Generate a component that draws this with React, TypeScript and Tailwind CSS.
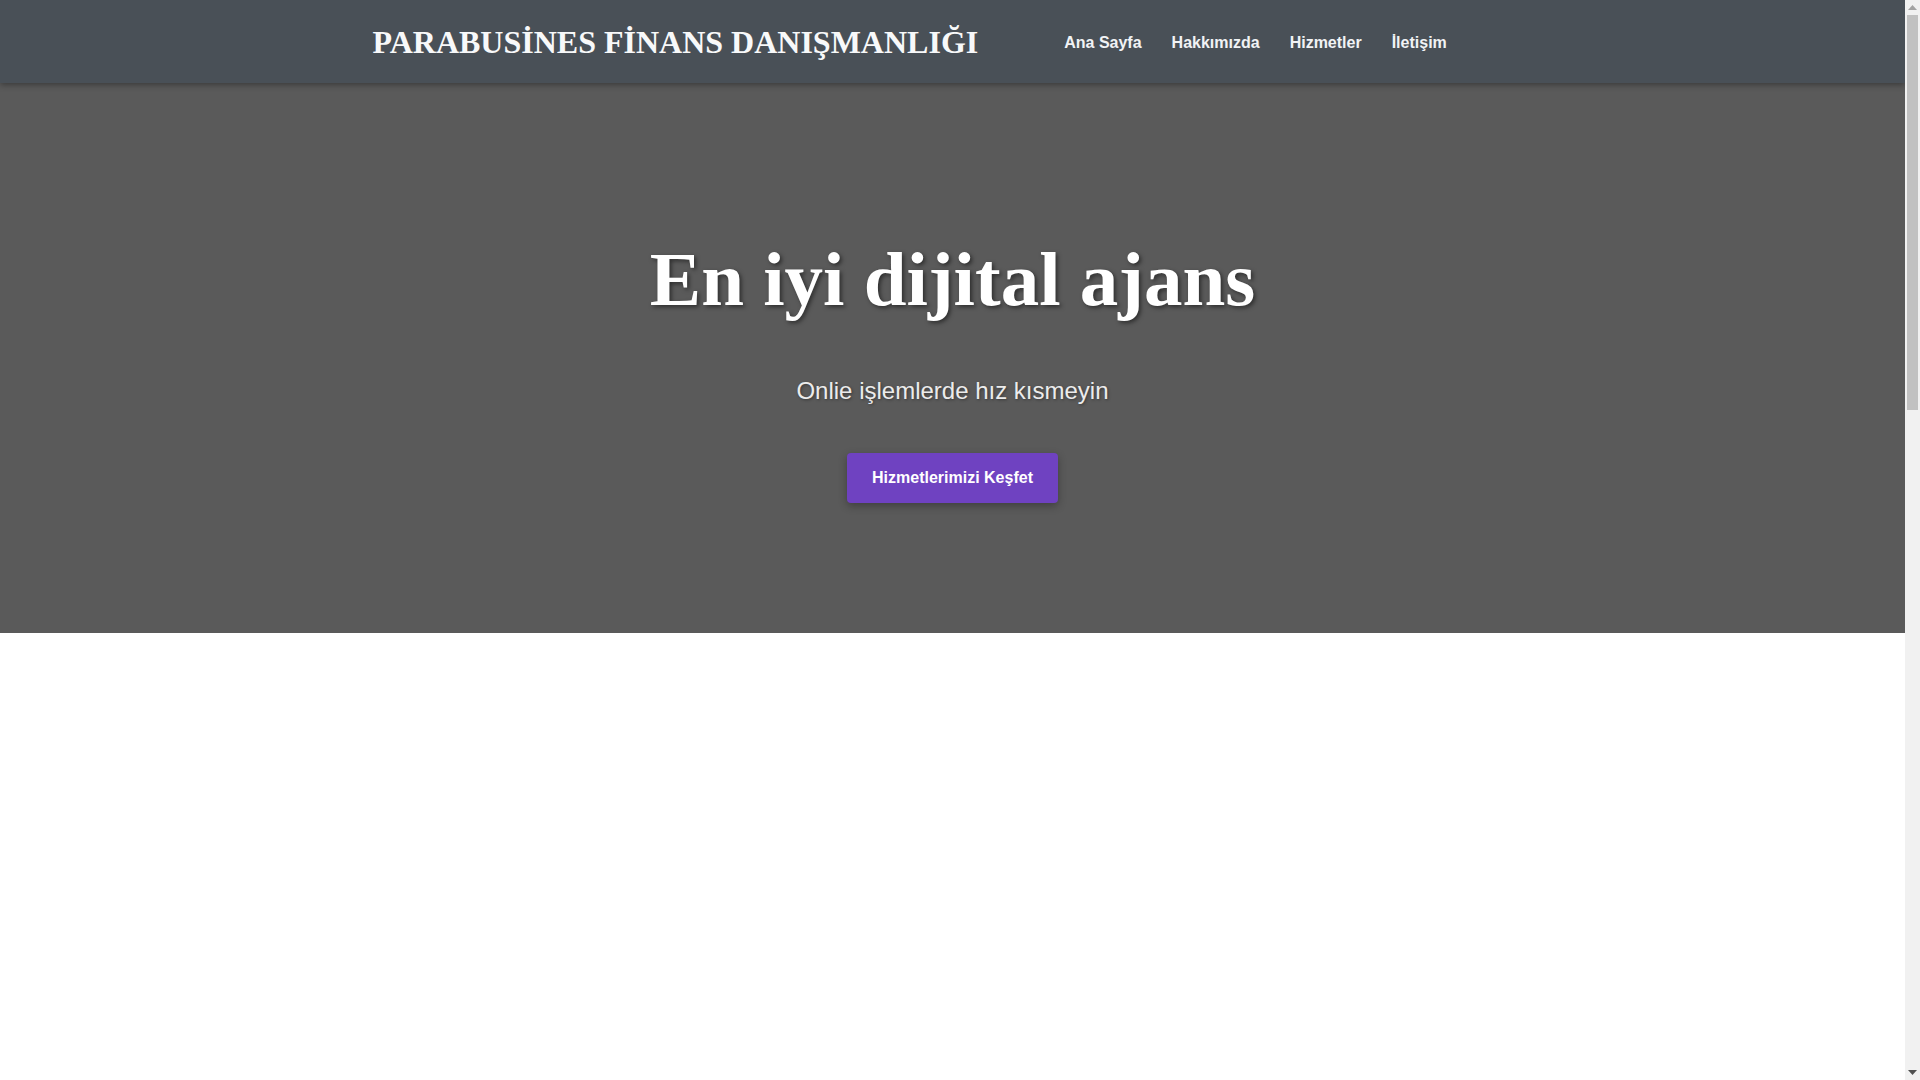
export default function App() {
  const links = ["Ana Sayfa", "Hakkımızda", "Hizmetler", "İletişim"];
  return (
    <div className="flex h-screen overflow-hidden bg-white">
      <main className="h-full min-w-0 flex-1 overflow-hidden">
        <header className="relative z-10 h-[83px] bg-[#495057] shadow-[0_2px_6px_rgba(0,0,0,0.35)]">
          <div className="mx-auto flex h-full w-[1200px] items-center px-5">
            <div className="whitespace-nowrap font-['Liberation_Serif',serif] text-[32px] font-bold leading-none text-[#f8f9fa]">
              PARABUSİNES FİNANS DANIŞMANLIĞI
            </div>
            <nav className="ml-[86px] mt-[2px] flex items-center gap-[30px] font-['Liberation_Sans',Arial,sans-serif] text-[16px] font-bold text-[#f1f3f5]">
              {links.map((l) => (
                <a key={l} href="#" className="whitespace-nowrap">
                  {l}
                </a>
              ))}
            </nav>
          </div>
        </header>
        <section className="flex h-[550px] flex-col items-center bg-[#5a5a5a] pt-[151px] text-center">
          <h1 className="font-['Liberation_Serif',serif] text-[77px] font-bold leading-[91px] text-white [text-shadow:2px_2px_4px_rgba(0,0,0,0.5)]">
            En iyi dijital ajans
          </h1>
          <p className="mt-[52px] font-['Liberation_Sans',Arial,sans-serif] text-[24px] leading-[28px] text-[#ececec] [text-shadow:1px_1px_3px_rgba(0,0,0,0.4)]">
            Onlie işlemlerde hız kısmeyin
          </p>
          <a
            href="#"
            className="mt-[48px] rounded-[4px] bg-[#6f42c1] px-[25px] py-[15px] font-['Liberation_Sans',Arial,sans-serif] text-[16px] font-bold leading-[20px] text-white shadow-[0_3px_8px_rgba(0,0,0,0.3)]"
          >
            Hizmetlerimizi Keşfet
          </a>
        </section>
        <section className="h-[2237px] bg-white" />
      </main>
      <aside className="flex h-full w-[15px] shrink-0 flex-col bg-[#f1f1f1]">
        <div className="flex h-[15px] shrink-0 items-center justify-center">
          <svg width="9" height="5" viewBox="0 0 9 5">
            <path d="M4.5 0 L9 5 L0 5 Z" fill="#a3a3a3" />
          </svg>
        </div>
        <div className="mx-[2px] h-[395px] shrink-0 bg-[#c1c1c1]" />
        <div className="flex-1" />
        <div className="flex h-[15px] shrink-0 items-center justify-center">
          <svg width="9" height="5" viewBox="0 0 9 5">
            <path d="M0 0 L9 0 L4.5 5 Z" fill="#505050" />
          </svg>
        </div>
      </aside>
    </div>
  );
}
